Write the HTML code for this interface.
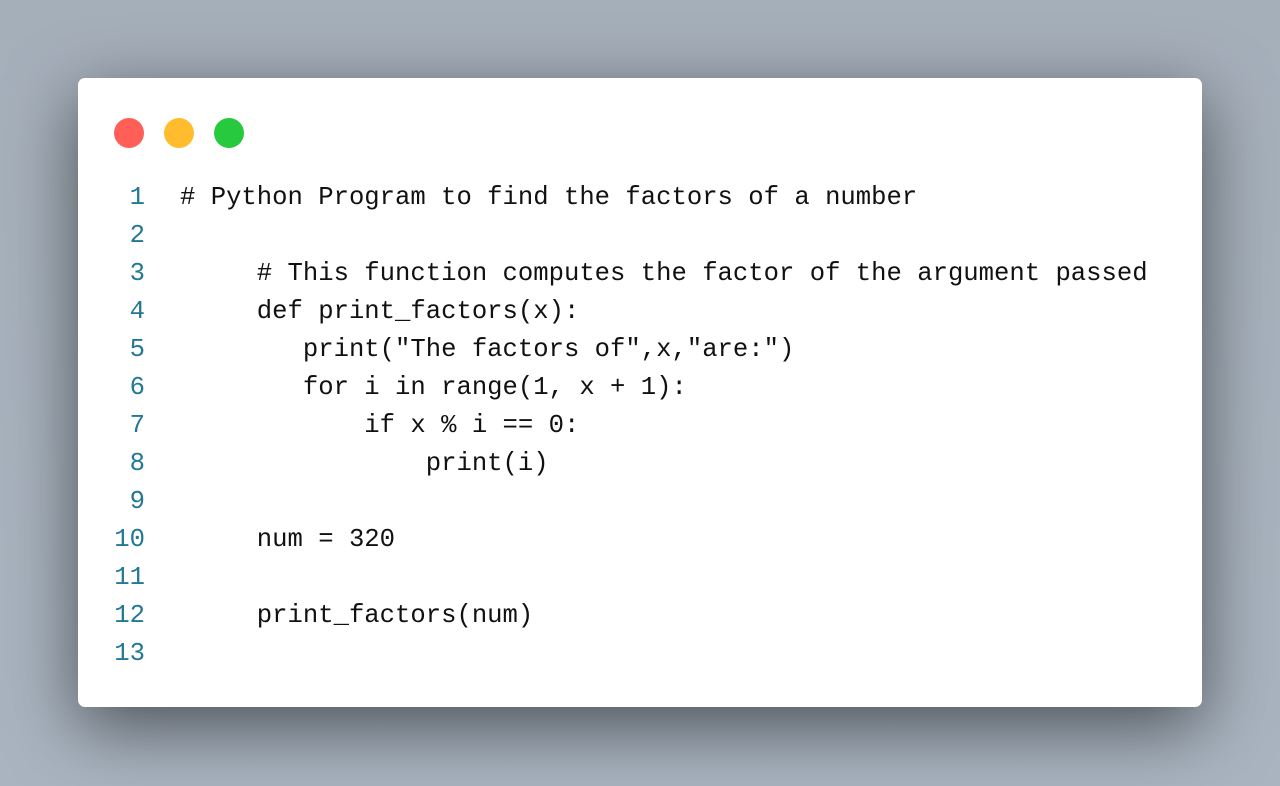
<!DOCTYPE html>
<html><head><meta charset="utf-8"><style>
html,body{margin:0;padding:0}
body{width:1280px;height:786px;overflow:hidden;background:linear-gradient(180deg,#a5afba 0%,#a9b4c0 100%);position:relative}
.card{position:absolute;left:78px;top:78px;width:1124px;height:629px;background:#fff;border-radius:7px;box-shadow:0 20px 70px rgba(0,0,0,0.55)}
.dot{position:absolute;top:40px;width:30px;height:30px;border-radius:50%}
.code{position:absolute;left:0;top:101px;font-family:"Liberation Mono",monospace;font-size:25.6px;line-height:38px;color:#111;white-space:pre}
.ln{position:absolute;left:0;width:67px;text-align:right;color:#237893}
.tx{position:absolute;left:102px}
</style></head><body>
<div class="card">
<div class="dot" style="left:36px;background:#ff5f56"></div>
<div class="dot" style="left:86px;background:#ffbd2e"></div>
<div class="dot" style="left:136px;background:#27c93f"></div>
<div class="code">
<div class="ln" style="top:0">1</div><div class="tx" style="top:0"># Python Program to find the factors of a number</div>
<div class="ln" style="top:38px">2</div>
<div class="ln" style="top:76px">3</div><div class="tx" style="top:76px">     # This function computes the factor of the argument passed</div>
<div class="ln" style="top:114px">4</div><div class="tx" style="top:114px">     def print_factors(x):</div>
<div class="ln" style="top:152px">5</div><div class="tx" style="top:152px">        print("The factors of",x,"are:")</div>
<div class="ln" style="top:190px">6</div><div class="tx" style="top:190px">        for i in range(1, x + 1):</div>
<div class="ln" style="top:228px">7</div><div class="tx" style="top:228px">            if x % i == 0:</div>
<div class="ln" style="top:266px">8</div><div class="tx" style="top:266px">                print(i)</div>
<div class="ln" style="top:304px">9</div>
<div class="ln" style="top:342px">10</div><div class="tx" style="top:342px">     num = 320</div>
<div class="ln" style="top:380px">11</div>
<div class="ln" style="top:418px">12</div><div class="tx" style="top:418px">     print_factors(num)</div>
<div class="ln" style="top:456px">13</div>
</div>
</div>
</body></html>
